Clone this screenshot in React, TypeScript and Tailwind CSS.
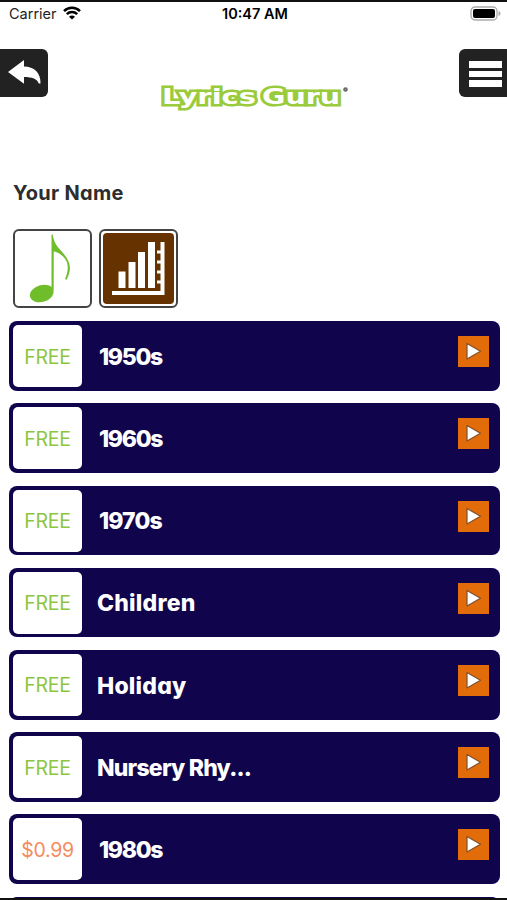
type Category = { title: string; price: string; titleClass: string };

const categories: Category[] = [
  { title: "1950s", price: "FREE", titleClass: "pl-[17px] tracking-[-1.3px]" },
  { title: "1960s", price: "FREE", titleClass: "pl-[17px] tracking-[-1.3px]" },
  { title: "1970s", price: "FREE", titleClass: "pl-[17px] tracking-[-0.9px]" },
  { title: "Children", price: "FREE", titleClass: "pl-[15px] tracking-[0.2px]" },
  { title: "Holiday", price: "FREE", titleClass: "pl-[15px] tracking-[0.2px]" },
  { title: "Nursery Rhy...", price: "FREE", titleClass: "pl-[15px] tracking-[-0.8px]" },
  { title: "1980s", price: "$0.99", titleClass: "pl-[17px] tracking-[-1.3px]" },
];

function StatusBar() {
  return (
    <div className="grid h-[24px] shrink-0 grid-cols-3 items-center pl-[9px] pr-[6px] text-[14.5px] text-[#222]">
      <div className="flex items-center gap-[6px]">
        <span>Carrier</span>
        <svg className="mb-[2px]" width="18" height="14" viewBox="0 0 18 14" fill="none" stroke="#000" strokeWidth="2.5">
          <path d="M1 5.2C5.5.7 12.500.7 17 5.2M3.800 8.200c3-2.800 7.400-2.800 10.400 0" />
          <path d="M9 13.600 6 10.700c1.700-1.500 4.300-1.500 6 0Z" fill="#000" stroke="none" />
        </svg>
      </div>
      <span className="whitespace-nowrap text-center font-semibold text-black">10:47 AM</span>
      <svg className="mb-[2px] justify-self-end" width="31" height="15" viewBox="0 0 31 15">
        <rect x="1" y="1" width="26" height="13" rx="4" fill="#fff" stroke="#aaa" strokeWidth="1.300" />
        <rect x="3" y="3" width="22" height="9" rx="2" fill="#000" />
        <path d="M28.500 5v5c1.500-.4 2-1.400 2-2.500s-.5-2.100-2-2.500Z" fill="#aaa" />
      </svg>
    </div>
  );
}

function Logo() {
  return (
    <svg className="mt-[30px]" width="190" height="44" viewBox="0 -4 190 44" role="img" aria-label="Lyrics Guru">
      <g
        fontFamily="'DejaVu Sans', sans-serif"
        fontWeight="700"
        fontSize="21.500"
        fill="#fff"
        stroke="#9acb3c"
        strokeWidth="5"
        strokeLinejoin="miter"
        strokeMiterlimit="3"
        paintOrder="stroke"
      >
        <text x="3" y="21" textLength="94" lengthAdjust="spacingAndGlyphs">Lyrics</text>
        <text x="103" y="21" textLength="78" lengthAdjust="spacingAndGlyphs">Guru</text>
      </g>
      <circle cx="186.500" cy="6.500" r="2.300" fill="#666" />
      <circle cx="186.500" cy="6.500" r=".8" fill="#999" />
    </svg>
  );
}

function Header() {
  return (
    <header className="mt-[23px] flex h-[129px] shrink-0 items-start justify-between">
      <button className="h-12 w-12 rounded-r-[6px] bg-[#222]" aria-label="Back">
        <svg width="48" height="48" viewBox="0 0 48 48" fill="#fff">
          <path d="M8 23 24 11v6.500c10 0 17 6.500 16.500 17h-1.800C37.500 30 32 28 24 28v6.700Z" />
        </svg>
      </button>
      <Logo />
      <button
        className="flex h-12 w-[48px] flex-col items-end justify-center gap-[3px] rounded-l-[6px] bg-[#222] pr-[5px] pt-[2px]"
        aria-label="Menu"
      >
        <span className="h-[7px] w-[33px] bg-white" />
        <span className="h-[6px] w-[33px] bg-white" />
        <span className="h-[7px] w-[33px] bg-white" />
      </button>
    </header>
  );
}

function Tiles() {
  return (
    <div className="mt-[21px] flex shrink-0 gap-[7px] pl-[13px]">
      <div className="h-[79px] w-[79px] overflow-hidden rounded-[6px] border-2 border-[#444]">
        <svg width="75" height="75" viewBox="15 231 75 75" fill="#6fbd2b">
          <path d="M51.500 234.500h1.200c1 8 4.500 12 9.400 17.500 8 9 10.500 16 4.500 27.700l-1.600-.6c4-9 4-17.500-2.400-23-3.300-3-6.500-4.300-8.900-4.500V290h-2.200Z" />
          <ellipse cx="41.800" cy="293.500" rx="12.200" ry="8.400" transform="rotate(-17 41.800 293.500)" />
        </svg>
      </div>
      <div className="h-[79px] w-[79px] rounded-[6px] border-2 border-[#444] p-[2px]">
        <div className="h-full w-full overflow-hidden rounded-[4px] bg-[#663300]">
          <svg width="71" height="71" viewBox="103 233 71 71" fill="#fff">
            <path d="M118.500 271.500h7V288h-7zM128.500 262h7v26h-7zM138 252h7v36h-7zM148 242h7v46h-7z" />
            <path d="M112 291h48.500v-7.500H157v-3h3.500v-7H157v-3h3.500v-7H157v-3h3.500v-7H157v-3h3.500V242h4v53H112Z" />
          </svg>
        </div>
      </div>
    </div>
  );
}

function PlayIcon() {
  return (
    <svg className="mr-[11px] mt-[15px] shrink-0" width="31" height="31" viewBox="0 0 31 31">
      <rect width="31" height="31" fill="#e26b0a" />
      <path d="M9 7.500V23L22.500 15.200Z" fill="#fff" stroke="#82502c" strokeWidth="1.200" strokeLinejoin="round" />
    </svg>
  );
}

function Row({ item }: { item: Category }) {
  return (
    <li className="flex h-[69.500px] shrink-0 rounded-[8px] bg-[#10054d] pl-[4px]">
      <div
        className={
          "mt-[4px] flex h-[62px] w-[69px] shrink-0 items-center justify-center rounded-[5px] bg-white pt-[2px] text-[19.500px] tracking-[-0.3px] " +
          (item.price === "FREE" ? "text-[#8cc63f]" : "text-[#f58a60]")
        }
      >
        {item.price}
      </div>
      <h2
        className={
          "flex min-w-0 flex-1 items-center whitespace-nowrap pt-[2px] text-[23px] font-extrabold text-white [font-feature-settings:'cv11'] " +
          item.titleClass
        }
      >
        {item.title}
      </h2>
      <PlayIcon />
    </li>
  );
}

export default function App() {
  return (
    <div className="flex h-[900px] w-[507px] flex-col overflow-hidden border-y-2 border-[#111] bg-white font-['Inter',sans-serif]">
      <StatusBar />
      <Header />
      <h1 className="shrink-0 pl-[13px] text-[20px] leading-[30px] font-bold tracking-[0.3px] text-[#2d2d2d] [font-feature-settings:'cv11']">
        Your Name
      </h1>
      <Tiles />
      <ul className="mt-[13.300px] flex shrink-0 flex-col gap-[12.700px] pl-[9px] pr-[7px]">
        {categories.map((item) => (
          <Row key={item.title} item={item} />
        ))}
        <li className="h-[69.500px] shrink-0 rounded-[8px] bg-[#10054d]" />
      </ul>
    </div>
  );
}
